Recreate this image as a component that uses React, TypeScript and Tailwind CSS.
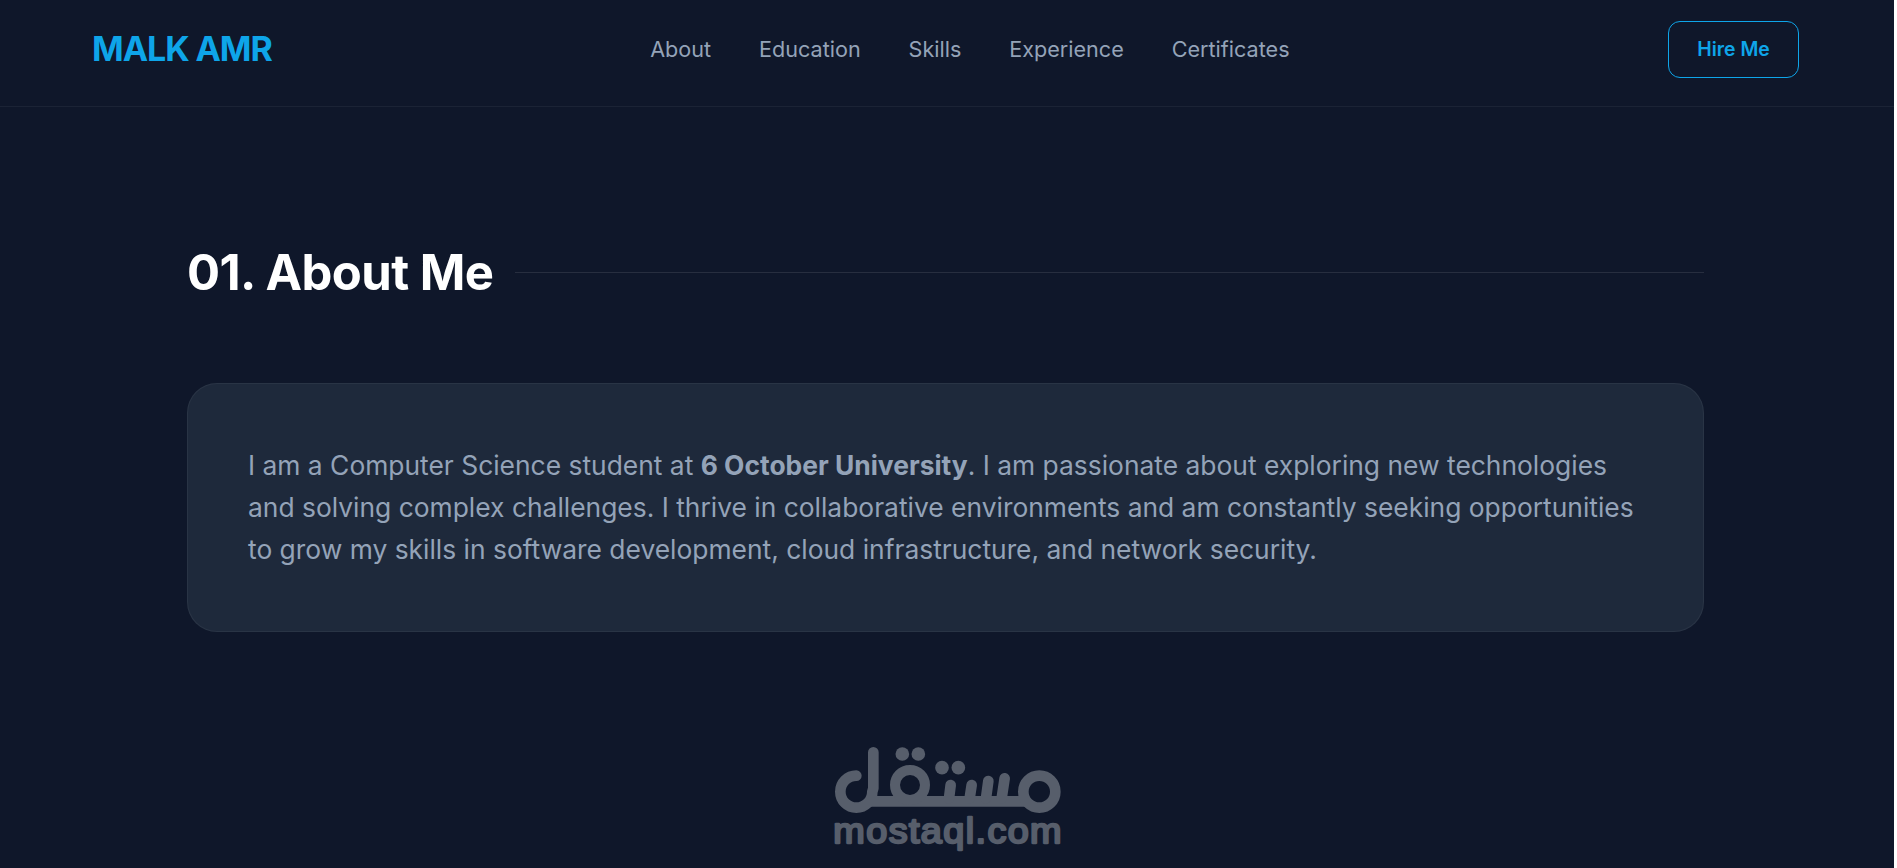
const NAV_LINKS = [
  { label: "About", href: "#about" },
  { label: "Education", href: "#education" },
  { label: "Skills", href: "#skills" },
  { label: "Experience", href: "#experience" },
  { label: "Certificates", href: "#certificates" },
];

function Header() {
  return (
    <header className="h-[107px] border-b border-white/5">
      <div className="h-[98px] pl-[92px] pr-[95px] flex items-center justify-between">
        <a href="#" className="pb-[2px] text-[34px] font-bold tracking-[-1.05px] text-[#0ea5e9]">
          MALK AMR
        </a>
        <nav>
          <ul className="flex gap-[47.9px] text-[21.6px] text-[#94a3b8]">
            {NAV_LINKS.map((link) => (
              <li key={link.href}>
                <a href={link.href} className="hover:text-white transition-colors">
                  {link.label}
                </a>
              </li>
            ))}
          </ul>
        </nav>
        <a
          href="#contact"
          className="w-[131px] h-[57px] pt-[2px] flex items-center justify-center rounded-[12px] border border-[#0ea5e9] text-[19.4px] font-semibold text-[#0ea5e9]"
        >
          Hire Me
        </a>
      </div>
    </header>
  );
}

function MostaqlLogo() {
  return (
    <svg
      viewBox="45 48 681 318"
      className="w-[227px] h-[106px] mx-auto overflow-visible"
      aria-label="mostaql"
    >
      <g fill="none" stroke="#575e6b" strokeWidth="32" strokeLinecap="round" strokeLinejoin="round">
        {/* lam */}
        <path d="M109 137A48 48 0 1 0 157 185L160 175V67" />
        {/* baseline */}
        <path d="M150 214H615" strokeLinecap="butt" />
        {/* qaf */}
        <circle cx="270" cy="165" r="45" strokeWidth="30" />
        {/* ta and sin teeth */}
        <path d="M392 165L387 205M455 165L449 205M505 153L498 205M554 145L545 205" />
        {/* mim */}
        <circle cx="658" cy="185" r="48" />
      </g>
      <g fill="#575e6b">
        <circle cx="247" cy="72" r="20.500" />
        <circle cx="295" cy="72" r="20.500" />
        <circle cx="366" cy="113" r="20.500" />
        <circle cx="415" cy="113" r="20.500" />
      </g>
      <text
        x="40"
        y="338"
        textLength="689"
        lengthAdjust="spacingAndGlyphs"
        fill="#575e6b"
        stroke="#575e6b"
        strokeWidth="7"
        strokeLinejoin="round"
        className="font-['Liberation_Sans',sans-serif] text-[107px] tracking-[4px]"
      >
        mostaql.com
      </text>
    </svg>
  );
}

export default function App() {
  return (
    <div className="h-[868px] overflow-hidden bg-[#0f172a] border-r-3 border-white font-['Inter',sans-serif]">
      <Header />

      <main className="w-[1517px] ml-[187px]">
        <section id="about" className="pt-[132px]">
          <div className="h-[66px] flex items-center gap-[22px]">
            <h2 className="text-[49px] leading-none font-bold tracking-[-0.55px] text-white whitespace-nowrap">
              01. About Me
            </h2>
            <div className="flex-1 h-px bg-white/10" />
          </div>

          <div className="mt-[78px] h-[249px] px-[60px] pt-[60px] rounded-[30px] border border-white/5 bg-[#1e293b]">
            <p className="text-[26.4px] leading-[42px] text-[#94a3b8]">
              I am a Computer Science student at <strong>6 October University</strong>. I am
              passionate about exploring new technologies and solving complex challenges. I thrive in
              collaborative environments and am constantly seeking opportunities to grow my skills in
              software development, cloud infrastructure, and network security.
            </p>
          </div>
        </section>

        <div className="mt-[114px] pl-[5px]">
          <MostaqlLogo />
        </div>
      </main>
    </div>
  );
}
